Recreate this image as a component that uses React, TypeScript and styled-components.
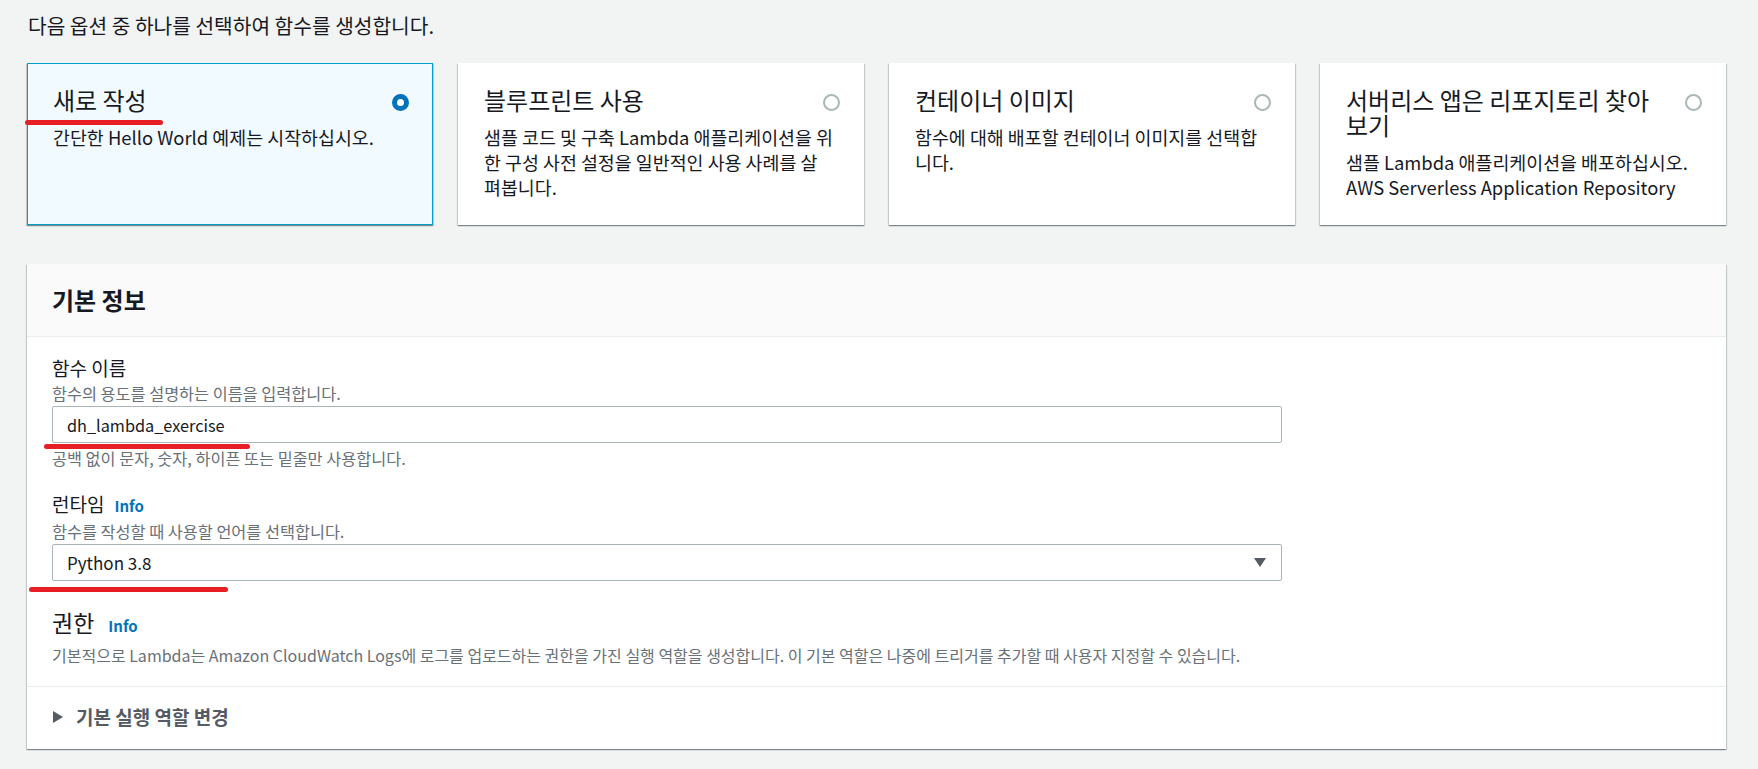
import { createGlobalStyle, styled } from "styled-components";

const GlobalStyle = createGlobalStyle`
  html, body {
    margin: 0;
    padding: 0;
    background: #f2f3f3;
  }
  body {
    font-family: "Noto Sans CJK KR", "Noto Sans", sans-serif;
    color: #16191f;
  }
  * {
    box-sizing: border-box;
  }
`;

const Page = styled.div`
  padding: 11px 32px 20px 27px;
`;

const Intro = styled.div`
  font-size: 20.3px;
  line-height: 28px;
  padding-left: 1px;
`;

const TileGrid = styled.div`
  display: grid;
  grid-template-columns: repeat(4, 1fr);
  gap: 25px;
  margin-top: 24px;
`;

const Tile = styled.div<{ $selected?: boolean }>`
  position: relative;
  padding: 23px 23px 24px 25px;
  background: ${(p) => (p.$selected ? "#f1faff" : "#ffffff")};
  border: 1px solid ${(p) => (p.$selected ? "#00a1c9" : "transparent")};
  box-shadow: 0 1px 1px 0 rgba(0, 28, 36, 0.3), 1px 1px 1px 0 rgba(0, 28, 36, 0.15),
    -1px 1px 1px 0 rgba(0, 28, 36, 0.15);
`;

const TileHeader = styled.div`
  display: flex;
  align-items: flex-start;
  gap: 12px;
`;

const TileTitle = styled.div`
  flex: 1;
  font-size: 24px;
  line-height: 25px;
`;

const Radio = styled.span<{ $checked?: boolean }>`
  flex: none;
  width: 17px;
  height: 17px;
  margin-top: 7px;
  border-radius: 50%;
  background: #ffffff;
  border: ${(p) => (p.$checked ? "5px solid #0073bb" : "2px solid #aab7b8")};
`;

const TileDesc = styled.div`
  margin: 13px 6.5px 0 0;
  font-size: 18.4px;
  line-height: 25px;
`;

const Panel = styled.section`
  margin-top: 39px;
  background: #ffffff;
  box-shadow: 0 1px 1px 0 rgba(0, 28, 36, 0.3), 1px 1px 1px 0 rgba(0, 28, 36, 0.15),
    -1px 1px 1px 0 rgba(0, 28, 36, 0.15);
`;

const PanelHeader = styled.div`
  padding: 22px 25px;
  background: #fafafa;
  border-bottom: 1px solid #eaeded;
`;

const PanelTitle = styled.h2`
  margin: 0;
  font-size: 24px;
  line-height: 28px;
  font-weight: 700;
`;

const PanelBody = styled.div`
  padding: 19px 25px 20px;
`;

const Field = styled.div`
  & + & {
    margin-top: 23px;
  }
`;

const Label = styled.div`
  font-size: 19px;
  line-height: 24px;
`;

const Hint = styled.div`
  margin-top: 3px;
  font-size: 16.3px;
  line-height: 21px;
  color: #687078;
`;

const Control = styled.div`
  position: relative;
  max-width: 1230px;
  margin-top: 2px;
`;

const TextInput = styled.input`
  display: block;
  width: 100%;
  height: 37px;
  padding: 0 14px;
  border: 1px solid #aab7b8;
  border-radius: 2px;
  background: #ffffff;
  font-family: inherit;
  font-size: 16.3px;
  color: #16191f;
  outline: none;
`;

const SelectBox = styled.div`
  display: flex;
  align-items: center;
  justify-content: space-between;
  height: 37px;
  padding: 0 15px 0 14px;
  border: 1px solid #aab7b8;
  border-radius: 2px;
  background: #ffffff;
  font-size: 17px;
`;

const Constraint = styled.div`
  margin-top: 4px;
  font-size: 16.3px;
  line-height: 22px;
  color: #687078;
`;

const SectionTitle = styled.div`
  margin-top: 27px;
  font-size: 23px;
  line-height: 28px;
`;

const InfoLink = styled.a<{ $gap: number }>`
  margin-left: ${(p) => p.$gap}px;
  font-size: 15px;
  font-weight: 700;
  color: #0073bb;
  text-decoration: none;
`;

const Description = styled.div`
  margin-top: 4px;
  font-size: 16px;
  line-height: 22px;
  color: #687078;
`;

const Expander = styled.div`
  display: flex;
  align-items: center;
  gap: 13px;
  padding: 18px 25px 20px 26px;
  border-top: 1px solid #eaeded;
  color: #545b64;
`;

const ExpandLabel = styled.span`
  font-size: 19px;
  line-height: 24px;
  font-weight: 700;
`;

const Mark = styled.div<{ $left: number; $top: number; $width: number }>`
  position: absolute;
  left: ${(p) => p.$left}px;
  top: ${(p) => p.$top}px;
  width: ${(p) => p.$width}px;
  height: 5px;
  border-radius: 3px;
  background: #e81e25;
  pointer-events: none;
`;

const tiles = [
  {
    title: "새로 작성",
    desc: "간단한 Hello World 예제는 시작하십시오.",
    selected: true,
  },
  {
    title: "블루프린트 사용",
    desc: "샘플 코드 및 구축 Lambda 애플리케이션을 위한 구성 사전 설정을 일반적인 사용 사례를 살펴봅니다.",
  },
  {
    title: "컨테이너 이미지",
    desc: "함수에 대해 배포할 컨테이너 이미지를 선택합니다.",
  },
  {
    title: "서버리스 앱은 리포지토리 찾아 보기",
    desc: "샘플 Lambda 애플리케이션을 배포하십시오. AWS Serverless Application Repository",
  },
];

function Caret() {
  return (
    <svg width="12" height="9" viewBox="0 0 12 9">
      <polygon points="0,0 12,0 6,9" fill="#545b64" />
    </svg>
  );
}

function ExpandIcon() {
  return (
    <svg width="10" height="12" viewBox="0 0 10 12">
      <polygon points="0,0 10,6 0,12" fill="#545b64" />
    </svg>
  );
}

export default function App() {
  return (
    <Page>
      <GlobalStyle />
      <Intro>다음 옵션 중 하나를 선택하여 함수를 생성합니다.</Intro>

      <TileGrid>
        {tiles.map((t) => (
          <Tile key={t.title} $selected={t.selected}>
            <TileHeader>
              <TileTitle>{t.title}</TileTitle>
              <Radio $checked={t.selected} />
            </TileHeader>
            <TileDesc>{t.desc}</TileDesc>
            {t.selected && <Mark $left={-3} $top={56} $width={138} />}
          </Tile>
        ))}
      </TileGrid>

      <Panel>
        <PanelHeader>
          <PanelTitle>기본 정보</PanelTitle>
        </PanelHeader>
        <PanelBody>
          <Field>
            <Label>함수 이름</Label>
            <Hint>함수의 용도를 설명하는 이름을 입력합니다.</Hint>
            <Control>
              <TextInput defaultValue="dh_lambda_exercise" />
              <Mark $left={-8} $top={38} $width={206} />
            </Control>
            <Constraint>공백 없이 문자, 숫자, 하이픈 또는 밑줄만 사용합니다.</Constraint>
          </Field>

          <Field>
            <Label>
              런타임
              <InfoLink href="#" $gap={10}>
                Info
              </InfoLink>
            </Label>
            <Hint>함수를 작성할 때 사용할 언어를 선택합니다.</Hint>
            <Control>
              <SelectBox>
                <span>Python 3.8</span>
                <Caret />
              </SelectBox>
              <Mark $left={-23} $top={43} $width={199} />
            </Control>
          </Field>

          <SectionTitle>
            권한
            <InfoLink href="#" $gap={14}>
              Info
            </InfoLink>
          </SectionTitle>
          <Description>
            기본적으로 Lambda는 Amazon CloudWatch Logs에 로그를 업로드하는 권한을 가진 실행 역할을
            생성합니다. 이 기본 역할은 나중에 트리거를 추가할 때 사용자 지정할 수 있습니다.
          </Description>
        </PanelBody>
        <Expander>
          <ExpandIcon />
          <ExpandLabel>기본 실행 역할 변경</ExpandLabel>
        </Expander>
      </Panel>
    </Page>
  );
}
